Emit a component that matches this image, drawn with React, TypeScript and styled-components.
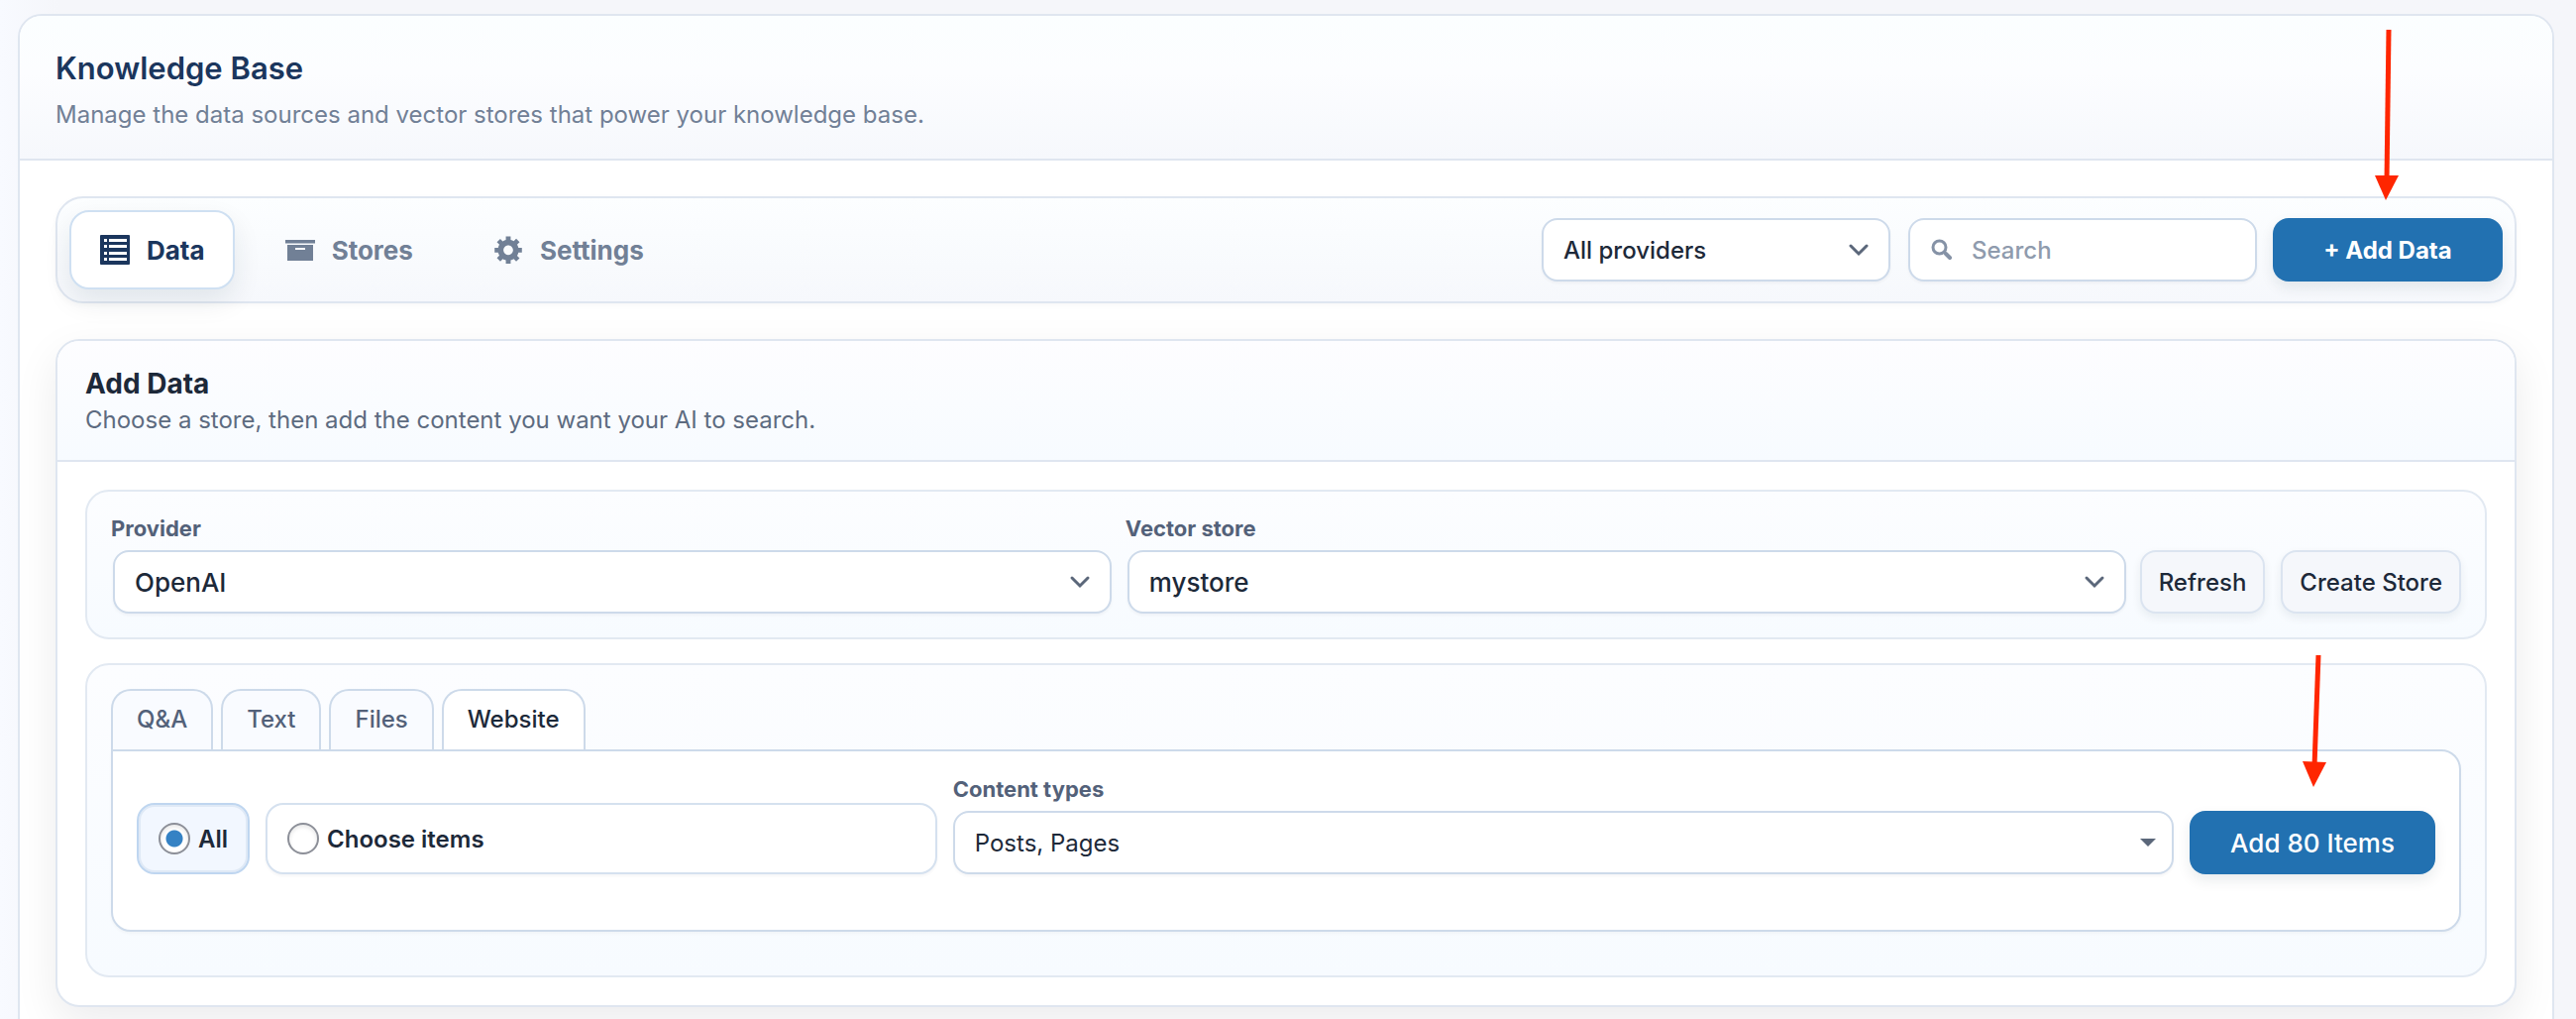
import React from "react";
import styled, { createGlobalStyle, css } from "styled-components";

const line = "#dfe6f0";
const fieldLine = "#cddaea";
const ink = "#1d2939";
const navy = "#1b365d";
const slate = "#718096";
const blue = "#2271b1";

const GlobalStyle = createGlobalStyle`
  *, *::before, *::after { box-sizing: border-box; }
  body {
    margin: 0;
    background: linear-gradient(90deg, #f8faff 0, #f5f6fa 60px);
    font-family: Inter, "Liberation Sans", sans-serif;
    color: ${ink};
  }
  button, input, select { font-family: inherit; margin: 0; }
`;

const Page = styled.main`
  padding: 14px 22px 0 18px;
  height: 100vh;
  overflow: hidden;
`;

const Shell = styled.section`
  position: relative;
  min-height: 1100px;
  border: 2px solid ${line};
  border-radius: 24px;
  background: #fff;
  overflow: hidden;
`;

const ShellHeader = styled.header`
  padding: 32px 36px 25px;
  border-bottom: 2px solid ${line};
  background: linear-gradient(180deg, #fbfeff 0%, #fcfdff 40%, #f6f8fc 100%);
`;

const Title = styled.h1`
  margin: 0;
  font-size: 31px;
  line-height: 42px;
  font-weight: 600;
  color: ${navy};
`;

const Lead = styled.p`
  margin: 7px 0 0;
  font-size: 24px;
  line-height: 38px;
  color: ${slate};
`;

const ShellBody = styled.div`
  display: flex;
  flex-direction: column;
  gap: 36px;
  padding: 36px;
`;

const Toolbar = styled.div`
  display: flex;
  align-items: center;
  justify-content: space-between;
  padding: 12px;
  border: 2px solid ${line};
  border-radius: 28px;
  background: linear-gradient(180deg, #fcfeff, #f6f8fc);
  box-shadow: 0 2px 6px rgba(15, 23, 42, 0.03);
`;

const MainTabs = styled.nav`
  display: flex;
  gap: 20px;
`;

const MainTab = styled.button<{ $active?: boolean }>`
  display: flex;
  align-items: center;
  gap: 14px;
  height: 80px;
  padding: 0 28px 0 26px;
  border: 2px solid transparent;
  border-radius: 20px;
  background: none;
  color: ${slate};
  font-size: 26px;
  font-weight: 700;
  svg { width: 36px; height: 36px; }
  ${(p) =>
    p.$active &&
    css`
      background: #fff;
      border-color: #cfe0f2;
      color: ${navy};
      box-shadow: 0 12px 28px rgba(15, 40, 60, 0.09);
    `}
`;

const Filters = styled.div`
  display: flex;
  align-items: center;
  gap: 16px;
`;

const fieldBox = css`
  height: 64px;
  border: 2px solid ${fieldLine};
  border-radius: 16px;
  background: #fff;
  color: ${ink};
  box-shadow: 0 2px 3px rgba(15, 23, 42, 0.04);
`;

const SelectWrap = styled.div<{ $width?: string }>`
  display: grid;
  align-items: center;
  width: ${(p) => p.$width ?? "auto"};
  margin: 0 2px;
  > * { grid-area: 1 / 1; }
  > svg {
    justify-self: end;
    margin-right: 20px;
    pointer-events: none;
  }
`;

const Select = styled.select<{ $size?: number; $weight?: number }>`
  ${fieldBox}
  appearance: none;
  width: 100%;
  padding: 0 60px 0 20px;
  font-size: ${(p) => p.$size ?? 26}px;
  font-weight: ${(p) => p.$weight ?? 500};
`;

const SearchBox = styled.label`
  ${fieldBox}
  display: flex;
  align-items: center;
  gap: 16px;
  width: 352px;
  padding: 0 18px;
  color: #8592a6;
`;

const SearchInput = styled.input`
  flex: 1;
  min-width: 0;
  padding: 0;
  border: 0;
  outline: 0;
  background: none;
  font-size: 24px;
  font-weight: 500;
  color: ${ink};
  &::placeholder { color: #8f9bad; opacity: 1; }
`;

const Primary = styled.button<{ $width: number; $large?: boolean }>`
  height: 64px;
  width: ${(p) => p.$width}px;
  border: 0;
  border-radius: 16px;
  background: ${blue};
  color: #fff;
  font-size: ${(p) => (p.$large ? 26 : 24)}px;
  font-weight: ${(p) => (p.$large ? 500 : 700)};
  box-shadow: 0 6px 14px rgba(15, 40, 60, 0.09);
`;

const Secondary = styled.button`
  height: 64px;
  padding: 0 17px;
  border: 2px solid #dbe4f0;
  border-radius: 16px;
  background: #f5f7fb;
  color: ${ink};
  font-size: 24px;
  font-weight: 500;
  white-space: nowrap;
  box-shadow: 0 4px 10px rgba(15, 40, 60, 0.07);
`;

const Card = styled.section`
  border: 2px solid ${line};
  border-radius: 24px;
  background: #fff;
  box-shadow: 0 16px 44px rgba(15, 15, 20, 0.08);
`;

const CardHeader = styled.header`
  padding: 24px 28px 22px;
  border-bottom: 2px solid ${line};
  border-radius: 22px 22px 0 0;
  background: linear-gradient(180deg, #fdfdff, #f7fbff);
`;

const CardTitle = styled.h2`
  margin: 0;
  font-size: 28px;
  line-height: 38px;
  font-weight: 700;
`;

const CardLead = styled.p`
  margin: 0;
  font-size: 24px;
  line-height: 36px;
  color: #5d6b80;
`;

const CardBody = styled.div`
  display: flex;
  flex-direction: column;
  gap: 24px;
  padding: 28px;
`;

const Panel = styled.div`
  padding: 24px;
  border: 2px solid #e2e9f2;
  border-radius: 24px;
  background: linear-gradient(180deg, #fcfdff, #f7fbff);
`;

const SourceRow = styled(Panel)`
  display: flex;
  align-items: flex-end;
  gap: 12px;
`;

const Field = styled.div`
  display: flex;
  flex: 1;
  flex-direction: column;
  gap: 8px;
  min-width: 0;
`;

const Label = styled.label`
  font-size: 22px;
  line-height: 27px;
  font-weight: 700;
  color: #536179;
`;

const Actions = styled.div`
  display: flex;
  gap: 16px;
`;

const ContentPanel = styled(Panel)`
  padding-bottom: 44px;
`;

const SubTabs = styled.div`
  display: flex;
  gap: 8px;
`;

const SubTab = styled.button<{ $active?: boolean }>`
  height: 61px;
  padding: 0 24px 2px;
  border: 2px solid ${fieldLine};
  border-bottom: 0;
  border-radius: 20px 20px 0 0;
  background: ${(p) => (p.$active ? "#fff" : "#f9fbff")};
  color: ${(p) => (p.$active ? ink : "#536179")};
  font-size: 24px;
  font-weight: 500;
`;

const TabBody = styled.div`
  display: flex;
  align-items: flex-end;
  gap: 16px;
  padding: 25px 24px 56px;
  border: 2px solid ${fieldLine};
  border-radius: 0 20px 20px 20px;
  background: #fff;
  box-shadow: 0 2px 3px rgba(15, 23, 42, 0.03);
`;

const Choice = styled.label<{ $active?: boolean; $grow?: boolean }>`
  display: flex;
  align-items: center;
  gap: 8px;
  height: 72px;
  padding: 0 20px;
  flex: ${(p) => (p.$grow ? "18 1 0" : "none")};
  border: 2px solid ${(p) => (p.$active ? "#bfd6f0" : "#d5e1ef")};
  border-radius: 18px;
  background: ${(p) => (p.$active ? "#f2f7ff" : "#fff")};
  box-shadow: ${(p) =>
    p.$active ? "inset 0 0 0 2px #dfe9f6" : "0 2px 3px rgba(15, 23, 42, 0.04)"};
  font-size: 24px;
  font-weight: 600;
`;

const Radio = styled.input`
  appearance: none;
  width: 32px;
  height: 32px;
  margin: 0;
  border: 2px solid #8c8f98;
  border-radius: 50%;
  background: #fff;
  box-shadow: inset 0 2px 4px rgba(0, 0, 0, 0.1);
  &:checked { background: radial-gradient(circle, #3582c4 8px, #fff 9px); }
`;

const TypesField = styled(Field)`
  flex: 35 1 0;
`;

const TypesWrap = styled(SelectWrap)`
  margin: 0;
  > svg { margin-right: 18px; }
`;

const Arrow = styled.svg<{ $top: number; $right: number }>`
  position: absolute;
  top: ${(p) => p.$top}px;
  right: ${(p) => p.$right}px;
  pointer-events: none;
`;

const Chevron = () => (
  <svg width="24" height="24" viewBox="0 0 24 24" fill="none" stroke="#5b677a" strokeWidth="3" strokeLinecap="round" aria-hidden="true">
    <path d="M4 8l8 8 8-8" />
  </svg>
);

const TableIcon = () => (
  <svg viewBox="0 0 36 36" fill="currentColor" fillRule="evenodd" aria-hidden="true">
    <path d="M4 3h28a1 1 0 0 1 1 1v28a1 1 0 0 1-1 1H4a1 1 0 0 1-1-1V4a1 1 0 0 1 1-1zM7 7v3h3V7zM12 7v3h18V7zM7 13v3h3v-3zM12 13v3h18v-3zM7 20v3h3v-3zM12 20v3h18v-3zM7 26v3h3v-3zM12 26v3h18v-3z" />
  </svg>
);

const ArchiveIcon = () => (
  <svg viewBox="0 0 36 36" fill="currentColor" fillRule="evenodd" aria-hidden="true">
    <path d="M3 8h30v3.500H3zM5 13h26v16H5zM13 16v2h10v-2z" />
  </svg>
);

const GearIcon = () => (
  <svg viewBox="-1.6 -0.8 22.2 22.2" fill="currentColor" aria-hidden="true">
    <path d="M18 12h-2.180c-.17.7-.44 1.350-.81 1.930l1.540 1.540-2.100 2.100-1.540-1.540c-.58.36-1.230.63-1.910.79V19H8v-2.180c-.68-.16-1.330-.43-1.910-.79l-1.540 1.540-2.120-2.120 1.540-1.540c-.36-.58-.63-1.230-.79-1.910H1V9.030h2.170c.16-.7.44-1.350.8-1.940L2.430 5.550l2.100-2.100 1.540 1.540c.58-.37 1.240-.64 1.930-.81V2h3v2.180c.68.16 1.330.43 1.910.79l1.540-1.540 2.120 2.120-1.540 1.540c.36.59.64 1.240.8 1.940H18V12zm-8.500 1.500c1.660 0 3-1.340 3-3s-1.340-3-3-3-3 1.340-3 3 1.340 3 3 3z" />
  </svg>
);

const SearchIcon = () => (
  <svg width="28" height="28" viewBox="0 0 28 28" fill="none" stroke="currentColor" aria-hidden="true">
    <circle cx="11.5" cy="11.5" r="6.5" strokeWidth="3" />
    <path d="M16 16l2 2" strokeWidth="3" />
    <path d="M18 18l4 4" strokeWidth="4" strokeLinecap="round" />
  </svg>
);

const Caret = () => (
  <svg width="16" height="10" viewBox="0 0 16 10" fill="#5b677a" aria-hidden="true">
    <path d="M0 1h16L8 9z" />
  </svg>
);

const mainTabs = [
  { label: "Data", icon: <TableIcon />, active: true },
  { label: "Stores", icon: <ArchiveIcon /> },
  { label: "Settings", icon: <GearIcon /> },
];

export default function App() {
  return (
    <Page>
      <GlobalStyle />
      <Shell>
        <ShellHeader>
          <Title>Knowledge Base</Title>
          <Lead>Manage the data sources and vector stores that power your knowledge base.</Lead>
        </ShellHeader>
        <ShellBody>
          <Toolbar>
            <MainTabs>
              {mainTabs.map((t) => (
                <MainTab key={t.label} type="button" $active={t.active}>
                  {t.icon}
                  {t.label}
                </MainTab>
              ))}
            </MainTabs>
            <Filters>
              <SelectWrap $width="352px">
                <Select $size={24} aria-label="Filter by provider" defaultValue="all">
                  <option value="all">All providers</option>
                </Select>
                <Chevron />
              </SelectWrap>
              <SearchBox>
                <SearchIcon />
                <SearchInput type="text" placeholder="Search" aria-label="Search" />
              </SearchBox>
              <Primary type="button" $width={232}>+ Add Data</Primary>
            </Filters>
          </Toolbar>

          <Card>
            <CardHeader>
              <CardTitle>Add Data</CardTitle>
              <CardLead>Choose a store, then add the content you want your AI to search.</CardLead>
            </CardHeader>
            <CardBody>
              <SourceRow>
                <Field>
                  <Label htmlFor="provider">Provider</Label>
                  <SelectWrap>
                    <Select id="provider" defaultValue="openai">
                      <option value="openai">OpenAI</option>
                    </Select>
                    <Chevron />
                  </SelectWrap>
                </Field>
                <Field>
                  <Label htmlFor="store">Vector store</Label>
                  <SelectWrap>
                    <Select id="store" defaultValue="mystore">
                      <option value="mystore">mystore</option>
                    </Select>
                    <Chevron />
                  </SelectWrap>
                </Field>
                <Actions>
                  <Secondary type="button">Refresh</Secondary>
                  <Secondary type="button">Create Store</Secondary>
                </Actions>
              </SourceRow>

              <ContentPanel>
                <SubTabs>
                  <SubTab type="button">Q&amp;A</SubTab>
                  <SubTab type="button">Text</SubTab>
                  <SubTab type="button">Files</SubTab>
                  <SubTab type="button" $active>Website</SubTab>
                </SubTabs>
                <TabBody>
                  <Choice $active>
                    <Radio type="radio" name="scope" defaultChecked />
                    All
                  </Choice>
                  <Choice $grow>
                    <Radio type="radio" name="scope" />
                    Choose items
                  </Choice>
                  <TypesField>
                    <Label htmlFor="types">Content types</Label>
                    <TypesWrap>
                      <Select id="types" $size={24} $weight={400} defaultValue="posts-pages">
                        <option value="posts-pages">Posts, Pages</option>
                      </Select>
                      <Caret />
                    </TypesWrap>
                  </TypesField>
                  <Primary type="button" $width={248} $large>Add 80 Items</Primary>
                </TabBody>
              </ContentPanel>
            </CardBody>
          </Card>
        </ShellBody>
        <Arrow $top={14} $right={154} width="26" height="172" viewBox="0 0 26 172" aria-hidden="true">
          <path d="M15 0L13 152" stroke="#ff2600" strokeWidth="5" />
          <path d="M1 147h24L12 172z" fill="#ff2600" />
        </Arrow>
        <Arrow $top={645} $right={227} width="26" height="134" viewBox="0 0 26 134" aria-hidden="true">
          <path d="M17 0L13 112" stroke="#ff2600" strokeWidth="5" />
          <path d="M1 107l24 1L12 133z" fill="#ff2600" />
        </Arrow>
      </Shell>
    </Page>
  );
}
